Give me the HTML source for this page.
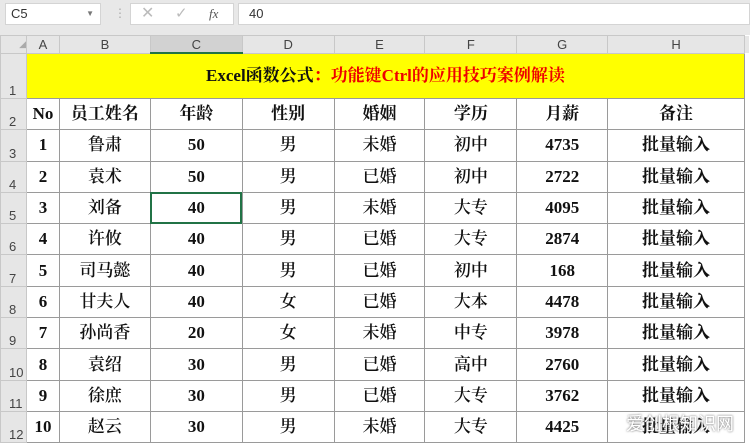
<!DOCTYPE html>
<html><head><meta charset="utf-8"><style>
body{margin:0;width:750px;height:441px;overflow:hidden;background:#fff;font-family:"Liberation Sans",sans-serif;position:relative}
.tb{position:absolute;left:0;top:0;width:750px;height:31px;background:#e8e8e8}
.box{position:absolute;background:#fff;border:1px solid #d4d4d4;font-size:13px;color:#333;line-height:20px;box-sizing:border-box}
.gap{position:absolute;left:0;top:31px;width:750px;height:4px;background:#e8e8e8}
table{position:absolute;left:0;top:35px;border-collapse:collapse;table-layout:fixed}
td{padding:0;text-align:center;border:1px solid #9a9a9a;font-family:"Liberation Serif","Noto Serif CJK SC",serif;font-size:17px;line-height:20px;color:#111;height:30.3px;font-weight:bold;overflow:hidden;white-space:nowrap;vertical-align:middle}
tr.h td{background:#e6e6e6;font-family:"Liberation Sans",sans-serif;font-weight:normal;font-size:13px;line-height:15px;color:#444;height:16px;border-color:#c8c8c8}
td.rh{background:#e6e6e6;font-family:"Liberation Sans",sans-serif;font-weight:normal;font-size:13px;line-height:15px;color:#444;vertical-align:bottom;text-align:left;padding-left:8px;border-color:#c8c8c8}
td.n{font-weight:600}
.sel{outline:2px solid #217346;outline-offset:-2px}
</style></head><body>
<div class="tb"></div>
<div class="box" style="left:5px;top:3px;width:96px;height:22px;padding-left:5px">C5<span style="position:absolute;right:6px;top:0;font-size:8px;color:#777">▼</span></div>
<div style="position:absolute;left:114px;top:6px;color:#aaa;font-size:12px">⋮</div>
<div class="box" style="left:130px;top:3px;width:104px;height:22px;color:#bbb"><span style="position:absolute;left:10px;font-size:16px">✕</span><span style="position:absolute;left:44px;font-size:15px">✓</span><span style="position:absolute;left:78px;font-family:'Liberation Serif',serif;font-style:italic;color:#555">fx</span></div>
<div class="box" style="left:238px;top:3px;width:512px;height:22px;padding-left:10px">40</div>
<div class="gap"></div>
<table>
<colgroup><col style="width:26px"><col style="width:33px"><col style="width:91px"><col style="width:92px"><col style="width:92px"><col style="width:91px"><col style="width:92px"><col style="width:91px"><col style="width:137px"><col style="width:5px"></colgroup>
<tr class="h"><td style="font-size:9px;color:#aaa;text-align:right">◢</td><td>A</td><td>B</td><td style="background:#d2d2d2;border-bottom:2px solid #217346">C</td><td>D</td><td>E</td><td>F</td><td>G</td><td>H</td><td style="border:none;background:#e6e6e6"></td></tr>
<tr><td class="rh" style="height:44px">1</td><td colspan="8" style="background:#ffff00;height:44px;font-size:17px">Excel函数公式<span style="color:#e00">：功能键Ctrl的应用技巧案例解读</span></td><td style="border:none"></td></tr>
<tr><td class="rh">2</td><td>No</td><td>员工姓名</td><td>年龄</td><td>性别</td><td>婚姻</td><td>学历</td><td>月薪</td><td>备注</td><td style="border:none"></td></tr>
<tr><td class="rh">3</td><td>1</td><td class="n">鲁肃</td><td>50</td><td class="n">男</td><td class="n">未婚</td><td class="n">初中</td><td>4735</td><td>批量输入</td><td style="border:none"></td></tr>
<tr><td class="rh">4</td><td>2</td><td class="n">袁术</td><td>50</td><td class="n">男</td><td class="n">已婚</td><td class="n">初中</td><td>2722</td><td>批量输入</td><td style="border:none"></td></tr>
<tr><td class="rh">5</td><td>3</td><td class="n">刘备</td><td class="sel">40</td><td class="n">男</td><td class="n">未婚</td><td class="n">大专</td><td>4095</td><td>批量输入</td><td style="border:none"></td></tr>
<tr><td class="rh">6</td><td>4</td><td class="n">许攸</td><td>40</td><td class="n">男</td><td class="n">已婚</td><td class="n">大专</td><td>2874</td><td>批量输入</td><td style="border:none"></td></tr>
<tr><td class="rh">7</td><td>5</td><td class="n">司马懿</td><td>40</td><td class="n">男</td><td class="n">已婚</td><td class="n">初中</td><td>168</td><td>批量输入</td><td style="border:none"></td></tr>
<tr><td class="rh">8</td><td>6</td><td class="n">甘夫人</td><td>40</td><td class="n">女</td><td class="n">已婚</td><td class="n">大本</td><td>4478</td><td>批量输入</td><td style="border:none"></td></tr>
<tr><td class="rh">9</td><td>7</td><td class="n">孙尚香</td><td>20</td><td class="n">女</td><td class="n">未婚</td><td class="n">中专</td><td>3978</td><td>批量输入</td><td style="border:none"></td></tr>
<tr><td class="rh">10</td><td>8</td><td class="n">袁绍</td><td>30</td><td class="n">男</td><td class="n">已婚</td><td class="n">高中</td><td>2760</td><td>批量输入</td><td style="border:none"></td></tr>
<tr><td class="rh">11</td><td>9</td><td class="n">徐庶</td><td>30</td><td class="n">男</td><td class="n">已婚</td><td class="n">大专</td><td>3762</td><td>批量输入</td><td style="border:none"></td></tr>
<tr><td class="rh">12</td><td>10</td><td class="n">赵云</td><td>30</td><td class="n">男</td><td class="n">未婚</td><td class="n">大专</td><td>4425</td><td>批量输入</td><td style="border:none"></td></tr>
</table>
<div style="position:absolute;left:626px;top:412px;font-family:'Noto Sans CJK SC',sans-serif;font-size:18px;line-height:22px;color:#fff;text-shadow:0 0 2px #555">爱创根知识网</div>
</body></html>
